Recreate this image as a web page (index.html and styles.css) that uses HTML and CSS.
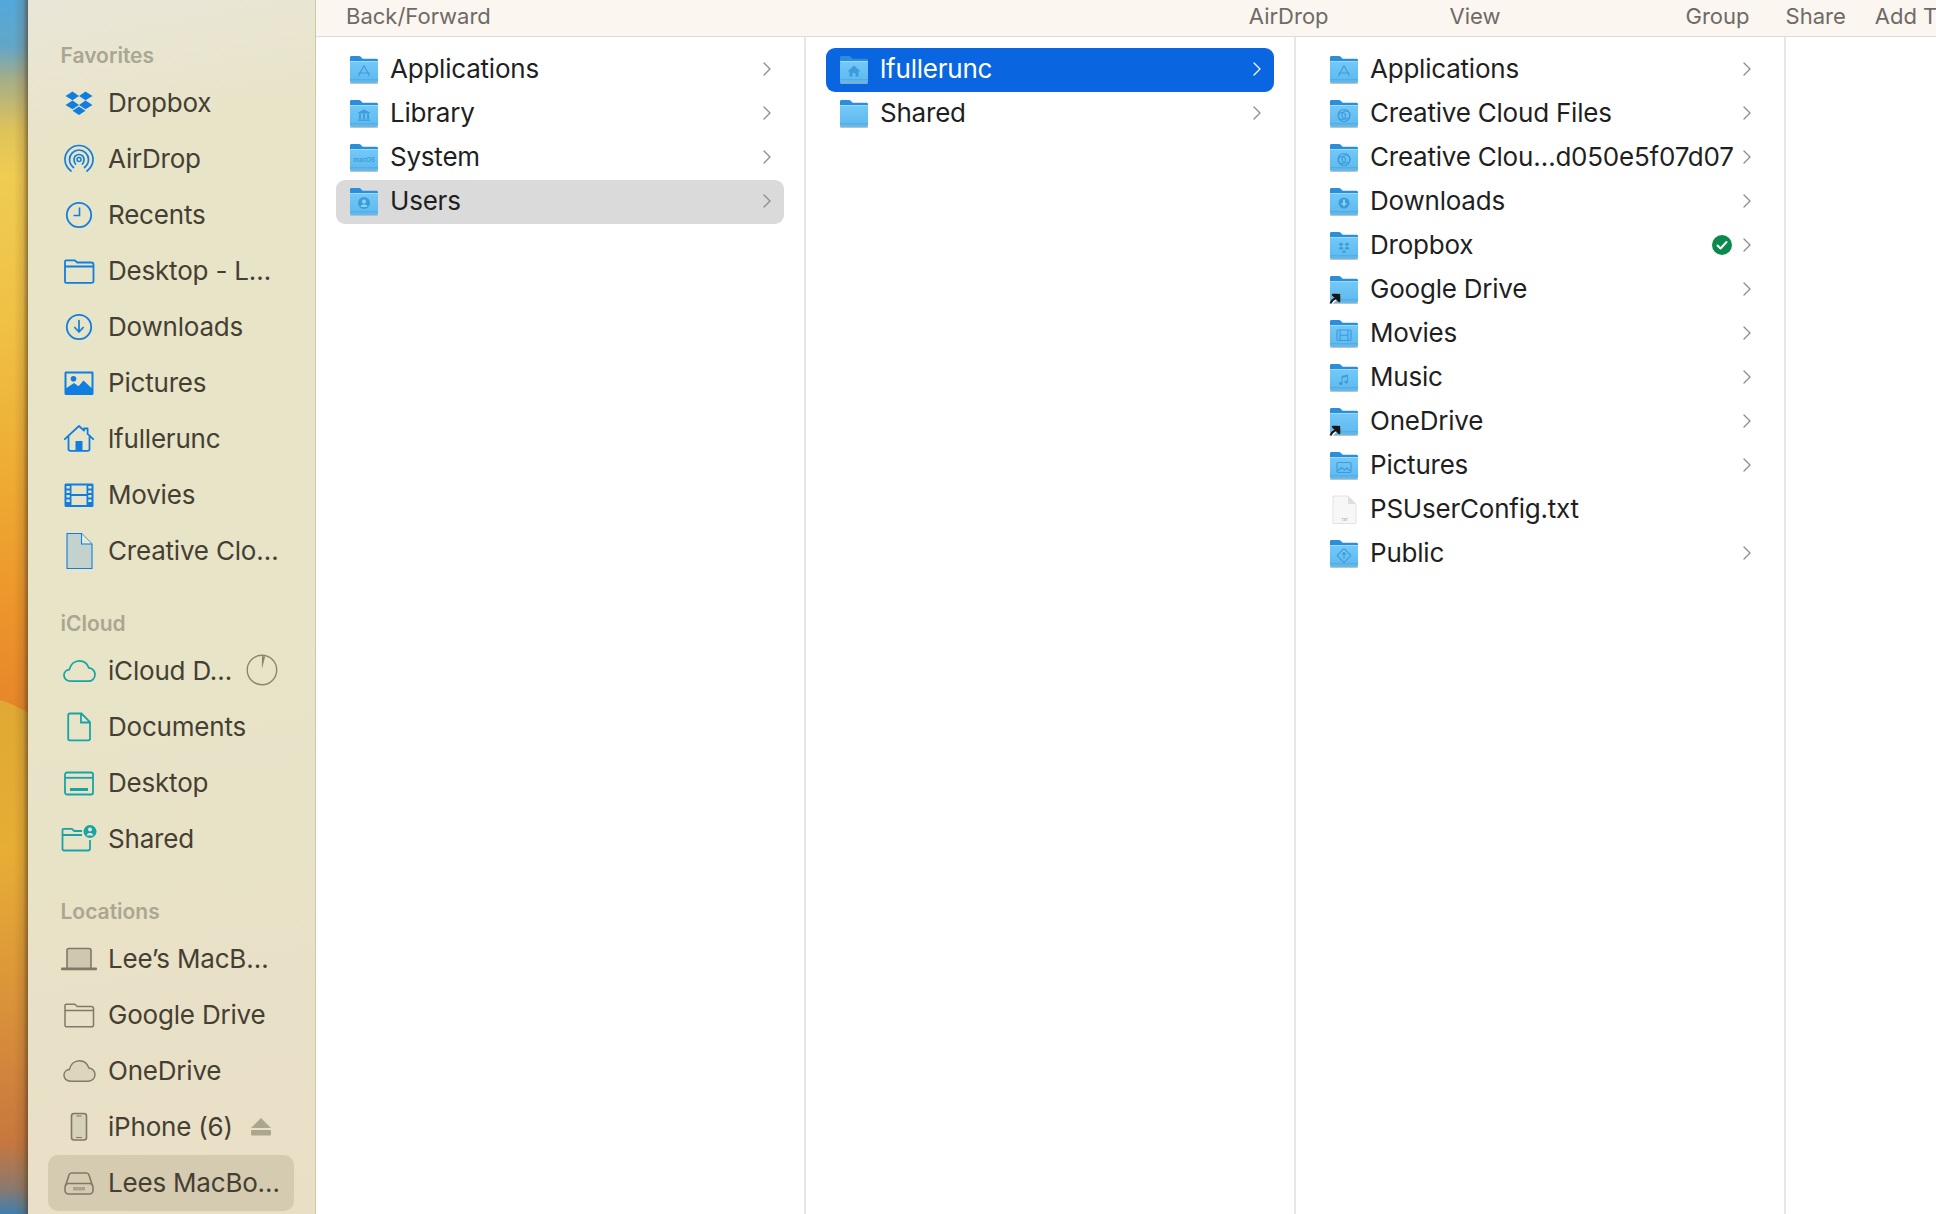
FILE: index.html
```html
<!DOCTYPE html>
<html lang="en">
<head>
<meta charset="utf-8">
<title>Finder</title>
<link rel="stylesheet" href="styles.css">
</head>
<body>
<svg class="defs" width="0" height="0" aria-hidden="true">
  <defs>
    <linearGradient id="fbody" x1="0" y1="0" x2="0" y2="1"><stop offset="0" stop-color="#74c9f8"/><stop offset="1" stop-color="#5cb8ee"/></linearGradient>
    <symbol id="folder" viewBox="0 0 30 30">
      <path d="M1 2.500C1 1.500 1.700 1 2.500 1H10c.8 0 1.200.3 1.700.8L13.700 3.800H27.500c.9 0 1.500.6 1.500 1.500v6H1z" fill="#2c8ed6"/>
      <rect x="1" y="6" width="28" height="22" rx="1.600" fill="url(#fbody)"/>
      <rect x="1" y="6" width="28" height="1" fill="#9adafb"/>
      <rect x="1" y="24.400" width="28" height=".8" fill="#4aa6e0"/>
      <path d="M1.200 28.300h27.600" stroke="#a9b6bf" stroke-width="1"/>
    </symbol>
    <g id="g-apps" fill="none" stroke="#3d9bd9" stroke-width="1.100"><path d="M15 10.500L9.500 21M15 10.500L20.500 21M9.500 18h11"/></g>
    <g id="g-lib" fill="#3d9bd9"><path d="M15 10.500l6 3v1H9v-1z"/><rect x="10" y="15" width="1.800" height="5"/><rect x="14" y="15" width="1.800" height="5"/><rect x="18.200" y="15" width="1.800" height="5"/><rect x="9" y="20.500" width="12" height="1.300"/></g>
    <g id="g-user" fill="#3d9bd9"><circle cx="15" cy="16" r="6"/><circle cx="15" cy="14.500" r="2" fill="#8ad3f8"/><path d="M11.500 20c.6-2 2-2.500 3.500-2.500s2.900.5 3.500 2.500z" fill="#8ad3f8"/></g>
    <g id="g-home" fill="#3d9bd9"><path d="M15 10.500l6.500 6h-2v5h-3v-3.500h-3v3.500h-3v-5h-2z"/></g>
    <g id="g-cc" fill="none" stroke="#3d9bd9" stroke-width="1.100"><circle cx="13" cy="17" r="3.500"/><circle cx="17" cy="16" r="4"/><circle cx="15" cy="16.500" r="6"/></g>
    <g id="g-down" fill="#3d9bd9"><circle cx="15" cy="16" r="5.500"/><path d="M14 12.500h2V16h2l-3 3.500-3-3.500h2z" fill="#8ad3f8"/></g>
    <g id="g-dbx" fill="#3d9bd9"><path d="M12 11.500l2.500 1.700-2.500 1.700-2.500-1.700zM18 11.500l2.500 1.700-2.500 1.700-2.500-1.700zM12 15.500l2.500 1.700-2.500 1.700-2.500-1.700zM18 15.500l2.500 1.700-2.500 1.700-2.500-1.700zM15 19.200l2.300 1.500-2.300 1.500-2.300-1.500z"/></g>
    <g id="g-movie" fill="none" stroke="#3d9bd9" stroke-width="1.100"><rect x="8" y="11" width="14" height="10.500" rx="1"/><path d="M11 11v10.500M19 11v10.500M11 16.200h8"/></g>
    <g id="g-music" fill="#3d9bd9"><path d="M12.500 13l6.500-1.500v7.500a1.800 1.500 0 1 1-1-1.300v-4l-4.500 1V20.500a1.800 1.500 0 1 1-1-1.300z"/></g>
    <g id="g-pic" fill="none" stroke="#3d9bd9" stroke-width="1.100"><rect x="8" y="11.500" width="14" height="10" rx="1"/><path d="M8.500 20l4-3.500 3 2.500 2.500-2 3.500 3"/></g>
    <g id="g-pub" fill="none" stroke="#3d9bd9" stroke-width="1.100"><rect x="10" y="11.500" width="10" height="10" transform="rotate(45 15 16.500)" rx="1"/><path d="M15 13.500v6M13 15.500l2-2 2 2"/></g>
    <symbol id="chev" viewBox="0 0 10 16"><path d="M2 2l6 6-6 6" fill="none" stroke="currentColor" stroke-width="1.300" stroke-linecap="round" stroke-linejoin="round"/></symbol>
    <symbol id="alias-arrow" viewBox="0 0 12 12">
      <path d="M1.500 10.500L9.500 2.500" stroke="#fff" stroke-width="3.800" stroke-linecap="round"/>
      <path d="M1.500 10.500Q3 6.500 6.500 5.200M3.800 1.800H10.300V8.300z" stroke="#161616" stroke-width="2" fill="#161616" stroke-linejoin="round"/>
    </symbol>
  </defs>
</svg>

<div class="window">
  <div class="wallpaper">
    <svg class="wall-shape" viewBox="0 0 28 1214" preserveAspectRatio="none" aria-hidden="true">
      <path d="M0 700C10 703 20 708 28 713V1214H0z" fill="url(#wall2)"/>
      <defs><linearGradient id="wall2" x1="0" y1="0" x2="0" y2="1"><stop offset="0" stop-color="#dfa933"/><stop offset=".3" stop-color="#e7ad35"/><stop offset=".62" stop-color="#d88f3a"/><stop offset=".86" stop-color="#c7773e"/><stop offset=".95" stop-color="#8b7a6e"/><stop offset="1" stop-color="#3f7eb0"/></linearGradient></defs>
    </svg>
  </div>

  <nav class="sidebar">
    <h2 class="side-label">Favorites</h2>
    <a class="side-row"><svg class="side-icon blue" viewBox="0 0 30 30"><path fill="currentColor" d="M8.500 3.500l6.500 4.400-6.500 4.400L1.500 7.900zM21.500 3.500l7 4.400-7 4.400L15 7.900zM8.500 12.500L15 16.900l-6.500 4.400-7-4.400zM21.500 12.500l7 4.400-7 4.400L15 16.900zM15 18.500l6.500 4.300L15 27l-6.500-4.200z"/></svg><span>Dropbox</span></a>
    <a class="side-row"><svg class="side-icon blue" viewBox="0 0 30 30"><g fill="none" stroke="currentColor" stroke-width="1.700" stroke-linecap="round"><path d="M7 27C2.500 23.500 1 19.500 1 15.500a14 14 0 0 1 28 0c0 4-1.500 8-6 11.500"/><path d="M9.500 23.500C6.500 21 5.500 18.500 5.500 15.500a9.500 9.500 0 0 1 19 0c0 3-1 5.500-4 8"/><path d="M11.500 20C10.500 18.800 10 17.200 10 15.500a5 5 0 0 1 10 0c0 1.700-.5 3.300-1.500 4.500"/></g><circle cx="15" cy="15.500" r="2" fill="none" stroke="currentColor" stroke-width="1.500"/></svg><span>AirDrop</span></a>
    <a class="side-row"><svg class="side-icon blue" viewBox="0 0 30 30"><circle cx="15" cy="15" r="12.200" fill="none" stroke="currentColor" stroke-width="1.800"/><path d="M15.500 7.500v8H9.500" fill="none" stroke="currentColor" stroke-width="1.600"/></svg><span>Recents</span></a>
    <a class="side-row"><svg class="side-icon blue" viewBox="0 0 30 30"><path d="M1 25.500V5.500c0-.8.500-1.200 1.200-1.200h8.600l2.500 2.200h14c1.200 0 2.200.9 2.200 2.200V25c0 1.200-1 1.800-2.200 1.800H2.200C1.500 26.800 1 26.300 1 25.500zM1 10.500h28" fill="none" stroke="currentColor" stroke-width="1.800"/></svg><span>Desktop - L…</span></a>
    <a class="side-row"><svg class="side-icon blue" viewBox="0 0 30 30"><circle cx="15" cy="15" r="12.200" fill="none" stroke="currentColor" stroke-width="1.800"/><path d="M15 8.500v11M10.800 15.500l4.200 4.500 4.200-4.500" fill="none" stroke="currentColor" stroke-width="1.700" stroke-linecap="round" stroke-linejoin="round"/></svg><span>Downloads</span></a>
    <a class="side-row"><svg class="side-icon blue" viewBox="0 0 30 30"><path fill="currentColor" fill-rule="evenodd" d="M2 3.500h26c1 0 1.500.6 1.500 1.500v20.500c0 .9-.6 1.500-1.500 1.500H2c-.9 0-1.500-.6-1.500-1.500V5C.5 4.100 1 3.500 2 3.500zM2.500 5.500v14.500l7.500-5 4.500 3.300 5-5.800 8 7.500V5.500zM9.500 8a2.800 2.800 0 1 0 0 5.600 2.800 2.800 0 0 0 0-5.600z"/></svg><span>Pictures</span></a>
    <a class="side-row"><svg class="side-icon blue" viewBox="0 0 30 30"><path d="M.800 15.200L15 2l5 4.600V4.500h3.600v5.400l5.600 5.300M4.500 13v12c0 1.200.7 1.900 1.900 1.900h17.200c1.200 0 1.900-.7 1.900-1.900V13" fill="none" stroke="currentColor" stroke-width="1.800" stroke-linecap="round" stroke-linejoin="round"/><rect x="11.500" y="17" width="7" height="10" fill="currentColor"/></svg><span>lfullerunc</span></a>
    <a class="side-row"><svg class="side-icon blue" viewBox="0 0 30 30"><path fill="currentColor" fill-rule="evenodd" d="M2 3.500h26c1 0 1.500.6 1.500 1.500v20.500c0 .9-.6 1.500-1.500 1.500H2c-.9 0-1.500-.6-1.500-1.500V5C.5 4.100 1 3.500 2 3.500zM7.500 5.500v8.500h15V5.500zM7.500 16v9h15v-9zM2.500 6v2.500h3.200V6zM2.500 10.500V13h3.200v-2.500zM2.500 15v2.500h3.200V15zM2.500 19.500V22h3.200v-2.500zM24.300 6v2.500h3.200V6zM24.300 10.500V13h3.200v-2.500zM24.300 15v2.500h3.200V15zM24.300 19.500V22h3.200v-2.500z"/></svg><span>Movies</span></a>
    <a class="side-row"><svg class="side-icon blue tall" viewBox="0 0 30 38"><path d="M3 1.500h14.500L28 12v24.500H3z" fill="#c3d2cc" stroke="currentColor" stroke-width="1.100"/><path d="M17.500 1.500V12H28" fill="#e5e8d4" stroke="currentColor" stroke-width="1.100"/></svg><span>Creative Clo…</span></a>

    <h2 class="side-label">iCloud</h2>
    <a class="side-row"><svg class="side-icon teal wide" viewBox="0 0 34 24"><path d="M8 22.500C3.500 22.500 1 19.500 1 16.500c0-3.500 2.600-5.800 5.500-6C7.800 5 12 1.500 17 1.500c4.800 0 8.300 3.200 9.700 7.400 3.800.3 6.300 3.500 6.300 6.800 0 3.800-3 6.800-7 6.800z" fill="none" stroke="currentColor" stroke-width="1.800"/></svg><span class="grow">iCloud D…</span><svg class="progress" viewBox="0 0 34 34"><circle cx="17" cy="17" r="15.700" fill="none" stroke="#8b8672" stroke-width="1.500"/><path d="M17 2l3.400.5L17 16z" fill="#8b8672"/></svg></a>
    <a class="side-row"><svg class="side-icon teal" viewBox="0 0 30 30"><path d="M6 1.500h11.500L26 10v16.500c0 1-.7 1.800-1.800 1.800H6c-1 0-1.800-.8-1.800-1.800V3.300C4.200 2.300 5 1.500 6 1.500zM17 1.700V10.500h8.800" fill="none" stroke="currentColor" stroke-width="1.800"/></svg><span>Documents</span></a>
    <a class="side-row"><svg class="side-icon teal" viewBox="0 0 30 30"><rect x="1" y="4.500" width="28" height="22" rx="2" fill="none" stroke="currentColor" stroke-width="1.800"/><path d="M1 9.800h28" stroke="currentColor" stroke-width="1.800"/><rect x="6" y="20" width="18" height="3" fill="currentColor"/></svg><span>Desktop</span></a>
    <a class="side-row"><svg class="side-icon teal shared" viewBox="0 0 36 30"><path d="M1.500 25V6c0-.8.500-1.200 1.200-1.200h8.100l2.500 2.200H21M1.500 11H21M29 16v8.500c0 1.200-.9 2-2.200 2H3c-.8 0-1.500-.6-1.500-1.500" fill="none" stroke="currentColor" stroke-width="1.800"/><circle cx="29" cy="7.500" r="6.500" fill="currentColor"/><circle cx="29" cy="5.500" r="2" fill="#e9e4c8"/><path d="M25.500 11.500c.7-2 2-2.500 3.500-2.500s2.800.5 3.500 2.500z" fill="#e9e4c8"/></svg><span>Shared</span></a>

    <h2 class="side-label">Locations</h2>
    <a class="side-row"><svg class="side-icon gray laptop" viewBox="0 0 36 24"><path d="M6 21V3.500C6 2.300 6.800 1.500 8 1.500h20c1.200 0 2 .8 2 2V21" fill="#cdc8af" stroke="currentColor" stroke-width="1.600"/><rect x="0" y="20.500" width="36" height="2.800" rx="1" fill="currentColor"/></svg><span>Lee’s MacB…</span></a>
    <a class="side-row"><svg class="side-icon gray" viewBox="0 0 30 30"><path d="M1 25.500V5.500c0-.8.500-1.200 1.200-1.200h8.600l2.500 2.200h14c1.200 0 2.200.9 2.200 2.200V25c0 1.200-1 1.800-2.200 1.800H2.200C1.500 26.800 1 26.300 1 25.500zM1 10.500h28" fill="none" stroke="currentColor" stroke-width="1.500"/></svg><span>Google Drive</span></a>
    <a class="side-row"><svg class="side-icon gray wide" viewBox="0 0 34 24"><path d="M8 22.500C3.500 22.500 1 19.500 1 16.500c0-3.500 2.600-5.800 5.500-6C7.800 5 12 1.500 17 1.500c4.800 0 8.300 3.200 9.700 7.400 3.800.3 6.300 3.500 6.300 6.800 0 3.800-3 6.800-7 6.800z" fill="#dcd6bd" stroke="currentColor" stroke-width="1.500"/></svg><span>OneDrive</span></a>
    <a class="side-row"><svg class="side-icon gray" viewBox="0 0 30 30"><rect x="7.500" y="1.500" width="15" height="26.500" rx="2.500" fill="#d6d1b7" stroke="currentColor" stroke-width="1.600"/><path d="M12.500 4h5M12 25.500h6" stroke="currentColor" stroke-width="1.200"/></svg><span class="grow">iPhone (6)</span><svg class="eject" viewBox="0 0 20 18"><path d="M10 0l10 10H0z" fill="#aba78e"/><rect y="12" width="20" height="5.500" rx="1" fill="#aba78e"/></svg></a>
    <a class="side-row active"><svg class="side-icon gray" viewBox="0 0 30 30"><path d="M1.500 18l3.500-11c.4-1.200 1.300-2 2.500-2h15c1.200 0 2.100.8 2.500 2l3.500 11" fill="none" stroke="currentColor" stroke-width="1.600"/><rect x="1" y="15.500" width="28" height="10.500" rx="3.500" fill="none" stroke="currentColor" stroke-width="1.600"/><path d="M12 19v3.500M14 19v3.500M16 19v3.500M18 19v3.500M20 19v3.500M10 19v3.500" stroke="currentColor" stroke-width="1"/></svg><span>Lees MacBo…</span></a>
  </nav>

  <main class="content">
    <header class="toolbar">
      <span class="tool tool-back">Back/Forward</span>
      <span class="tool tool-airdrop">AirDrop</span>
      <span class="tool tool-view">View</span>
      <span class="tool tool-group">Group</span>
      <span class="tool tool-share">Share</span>
      <span class="tool tool-add">Add Tags</span>
    </header>
    <div class="columns">
      <section class="column">
        <div class="row"><svg class="ficon" viewBox="0 0 30 30"><use href="#folder" width="30" height="30"/><use href="#g-apps"/></svg><span class="name">Applications</span><svg class="chev"><use href="#chev"/></svg></div>
        <div class="row"><svg class="ficon" viewBox="0 0 30 30"><use href="#folder" width="30" height="30"/><use href="#g-lib"/></svg><span class="name">Library</span><svg class="chev"><use href="#chev"/></svg></div>
        <div class="row"><svg class="ficon" viewBox="0 0 30 30"><use href="#folder" width="30" height="30"/><text class="macos" x="15" y="18.500">macOS</text></svg><span class="name">System</span><svg class="chev"><use href="#chev"/></svg></div>
        <div class="row row-gray"><svg class="ficon" viewBox="0 0 30 30"><use href="#folder" width="30" height="30"/><use href="#g-user"/></svg><span class="name">Users</span><svg class="chev"><use href="#chev"/></svg></div>
      </section>
      <section class="column">
        <div class="row row-blue"><svg class="ficon" viewBox="0 0 30 30"><use href="#folder" width="30" height="30"/><use href="#g-home"/></svg><span class="name">lfullerunc</span><svg class="chev"><use href="#chev"/></svg></div>
        <div class="row"><svg class="ficon" viewBox="0 0 30 30"><use href="#folder" width="30" height="30"/></svg><span class="name">Shared</span><svg class="chev"><use href="#chev"/></svg></div>
      </section>
      <section class="column">
        <div class="row"><svg class="ficon" viewBox="0 0 30 30"><use href="#folder" width="30" height="30"/><use href="#g-apps"/></svg><span class="name">Applications</span><svg class="chev"><use href="#chev"/></svg></div>
        <div class="row"><svg class="ficon" viewBox="0 0 30 30"><use href="#folder" width="30" height="30"/><use href="#g-cc"/></svg><span class="name">Creative Cloud Files</span><svg class="chev"><use href="#chev"/></svg></div>
        <div class="row"><svg class="ficon" viewBox="0 0 30 30"><use href="#folder" width="30" height="30"/><use href="#g-cc"/></svg><span class="name">Creative Clou…d050e5f07d07</span><svg class="chev"><use href="#chev"/></svg></div>
        <div class="row"><svg class="ficon" viewBox="0 0 30 30"><use href="#folder" width="30" height="30"/><use href="#g-down"/></svg><span class="name">Downloads</span><svg class="chev"><use href="#chev"/></svg></div>
        <div class="row"><svg class="ficon" viewBox="0 0 30 30"><use href="#folder" width="30" height="30"/><use href="#g-dbx"/></svg><span class="name">Dropbox</span><svg class="check" viewBox="0 0 20 20"><circle cx="10" cy="10" r="10" fill="#0b8a4d"/><path d="M5.500 10.500l3 3 6-6.500" fill="none" stroke="#fff" stroke-width="2" stroke-linecap="round" stroke-linejoin="round"/></svg><svg class="chev"><use href="#chev"/></svg></div>
        <div class="row"><span class="alias-wrap"><svg class="ficon" viewBox="0 0 30 30"><use href="#folder" width="30" height="30"/></svg><svg class="alias"><use href="#alias-arrow"/></svg></span><span class="name">Google Drive</span><svg class="chev"><use href="#chev"/></svg></div>
        <div class="row"><svg class="ficon" viewBox="0 0 30 30"><use href="#folder" width="30" height="30"/><use href="#g-movie"/></svg><span class="name">Movies</span><svg class="chev"><use href="#chev"/></svg></div>
        <div class="row"><svg class="ficon" viewBox="0 0 30 30"><use href="#folder" width="30" height="30"/><use href="#g-music"/></svg><span class="name">Music</span><svg class="chev"><use href="#chev"/></svg></div>
        <div class="row"><span class="alias-wrap"><svg class="ficon" viewBox="0 0 30 30"><use href="#folder" width="30" height="30"/></svg><svg class="alias"><use href="#alias-arrow"/></svg></span><span class="name">OneDrive</span><svg class="chev"><use href="#chev"/></svg></div>
        <div class="row"><svg class="ficon" viewBox="0 0 30 30"><use href="#folder" width="30" height="30"/><use href="#g-pic"/></svg><span class="name">Pictures</span><svg class="chev"><use href="#chev"/></svg></div>
        <div class="row"><svg class="ficon" viewBox="0 0 30 30"><path d="M4 1h15l8 8v19.500H4z" fill="#f7f7f7" stroke="#e3e3e3"/><path d="M19 1v8h8" fill="#dedede"/><text class="txt" x="15.500" y="26">TXT</text></svg><span class="name">PSUserConfig.txt</span></div>
        <div class="row"><svg class="ficon" viewBox="0 0 30 30"><use href="#folder" width="30" height="30"/><use href="#g-pub"/></svg><span class="name">Public</span><svg class="chev"><use href="#chev"/></svg></div>
      </section>
    </div>
  </main>
</div>
</body>
</html>
```

FILE: styles.css
```css
* { box-sizing: border-box; }

html, body {
  margin: 0;
  height: 100%;
  overflow: hidden;
  background: #fff;
}

body {
  font-family: Inter, "Liberation Sans", sans-serif;
}

.defs { position: absolute; }

.window {
  display: grid;
  grid-template-columns: 28px 288px 1fr;
  height: 1214px;
  width: 1936px;
  overflow: hidden;
}

/* wallpaper strip */
.wallpaper {
  position: relative;
  background: linear-gradient(180deg, #52a8dc 0, #62a6c8 46px, #a3ad8a 78px, #dfc35a 130px, #efcc52 175px, #efc044 330px, #eeab33 480px, #ec932a 620px, #e5842a 720px);
}
.wallpaper::after {
  content: "";
  position: absolute;
  inset: 0;
  background: linear-gradient(90deg, rgba(110, 70, 20, 0) 50%, rgba(110, 70, 20, .18) 82%, rgba(80, 60, 40, .62) 100%);
}
.wall-shape {
  display: block;
  width: 100%;
  height: 100%;
}

/* sidebar */
.sidebar {
  display: flex;
  flex-direction: column;
  padding: 10.5px 21px 0 20px;
  background: linear-gradient(170deg, #e9e6d8 0, #e8e4c8 12%, #e8e4c8 55%, #e9dfc6 100%);
  border-right: 1px solid #cdc8ac;
  color: #453f33;
}
.side-label {
  margin: 0;
  height: 64px;
  padding: 32px 0 0 12.500px;
  font-size: 21px;
  line-height: 26px;
  font-weight: 600;
  color: #aaa690;
}
.side-row {
  display: flex;
  align-items: center;
  flex: 0 0 56px;
  gap: 14px;
  padding: 0 19px 0 16px;
  font-size: 26px;
  letter-spacing: -.2px;
  border-radius: 10px;
  white-space: nowrap;
}
.side-row.active { background: #d5cbb1; }
.side-row .grow { flex: 1; }
.side-icon {
  flex: 0 0 30px;
  width: 30px;
  height: 30px;
  overflow: visible;
}
.side-icon.tall { height: 38px; }
.side-icon.wide { flex-basis: 33px; width: 33px; height: 24px; margin: 0 -1.500px; }
.side-icon.shared { flex-basis: 36px; width: 36px; height: 30px; margin: 0 -3px 0 -3px; }
.side-icon.laptop { flex-basis: 36px; width: 36px; height: 24px; margin: 0 -3px; }
.blue { color: #0f7ee0; }
.teal { color: #1aa3a6; }
.gray { color: #7f7a68; }
.progress { width: 32px; height: 32px; margin: 0 -3px 2px 0; }
.eject { width: 20px; height: 18px; margin-right: 4px; }

/* main */
.content {
  display: flex;
  flex-direction: column;
  min-width: 0;
  background: #fff;
}
.toolbar {
  display: flex;
  align-items: center;
  flex: 0 0 37px;
  padding: 0 0 4px 30px;
  background: #fbf6f0;
  border-bottom: 1px solid #dfdcd8;
  color: #6f6a66;
  font-size: 22px;
  white-space: nowrap;
}
.tool-airdrop { margin-left: 758px; }
.tool-view { margin-left: 121px; }
.tool-group { margin-left: 185px; }
.tool-share { margin-left: 36px; }
.tool-add { margin-left: 29px; }

.columns {
  display: grid;
  grid-template-columns: repeat(3, 490px);
  flex: 1;
}
.column {
  padding: 11px 20px 0 20px;
  border-right: 2px solid #e7e7e7;
}
.row {
  display: flex;
  align-items: center;
  height: 44px;
  padding: 0 12px 0 13px;
  border-radius: 9px;
  color: #1f1f1f;
  font-size: 26px;
  letter-spacing: -.22px;
  white-space: nowrap;
}
.ficon {
  flex: 0 0 30px;
  width: 30px;
  height: 30px;
  display: block;
}
.name {
  flex: 1;
  margin-left: 11px;
  padding-bottom: 3px;
}
.chev {
  flex: 0 0 10px;
  width: 10px;
  height: 16px;
  margin-bottom: 2px;
  color: #8c8c8c;
}
.check {
  flex: 0 0 20px;
  width: 20px;
  height: 20px;
  margin: 0 10px 2px 0;
}
.row-gray { background: #dadada; }
.row-blue { background: #0a66e0; color: #fff; }
.row-blue .chev { color: #fff; }

.alias-wrap { position: relative; display: block; width: 30px; height: 30px; }
.alias {
  position: absolute;
  left: 0;
  bottom: 0;
  width: 12px;
  height: 12px;
}
.macos {
  font-family: Inter, sans-serif;
  font-size: 6.500px;
  font-weight: 600;
  text-anchor: middle;
  fill: #3d9bd9;
}
.txt {
  font-family: Inter, sans-serif;
  font-size: 3.500px;
  text-anchor: middle;
  fill: #888;
}
```
